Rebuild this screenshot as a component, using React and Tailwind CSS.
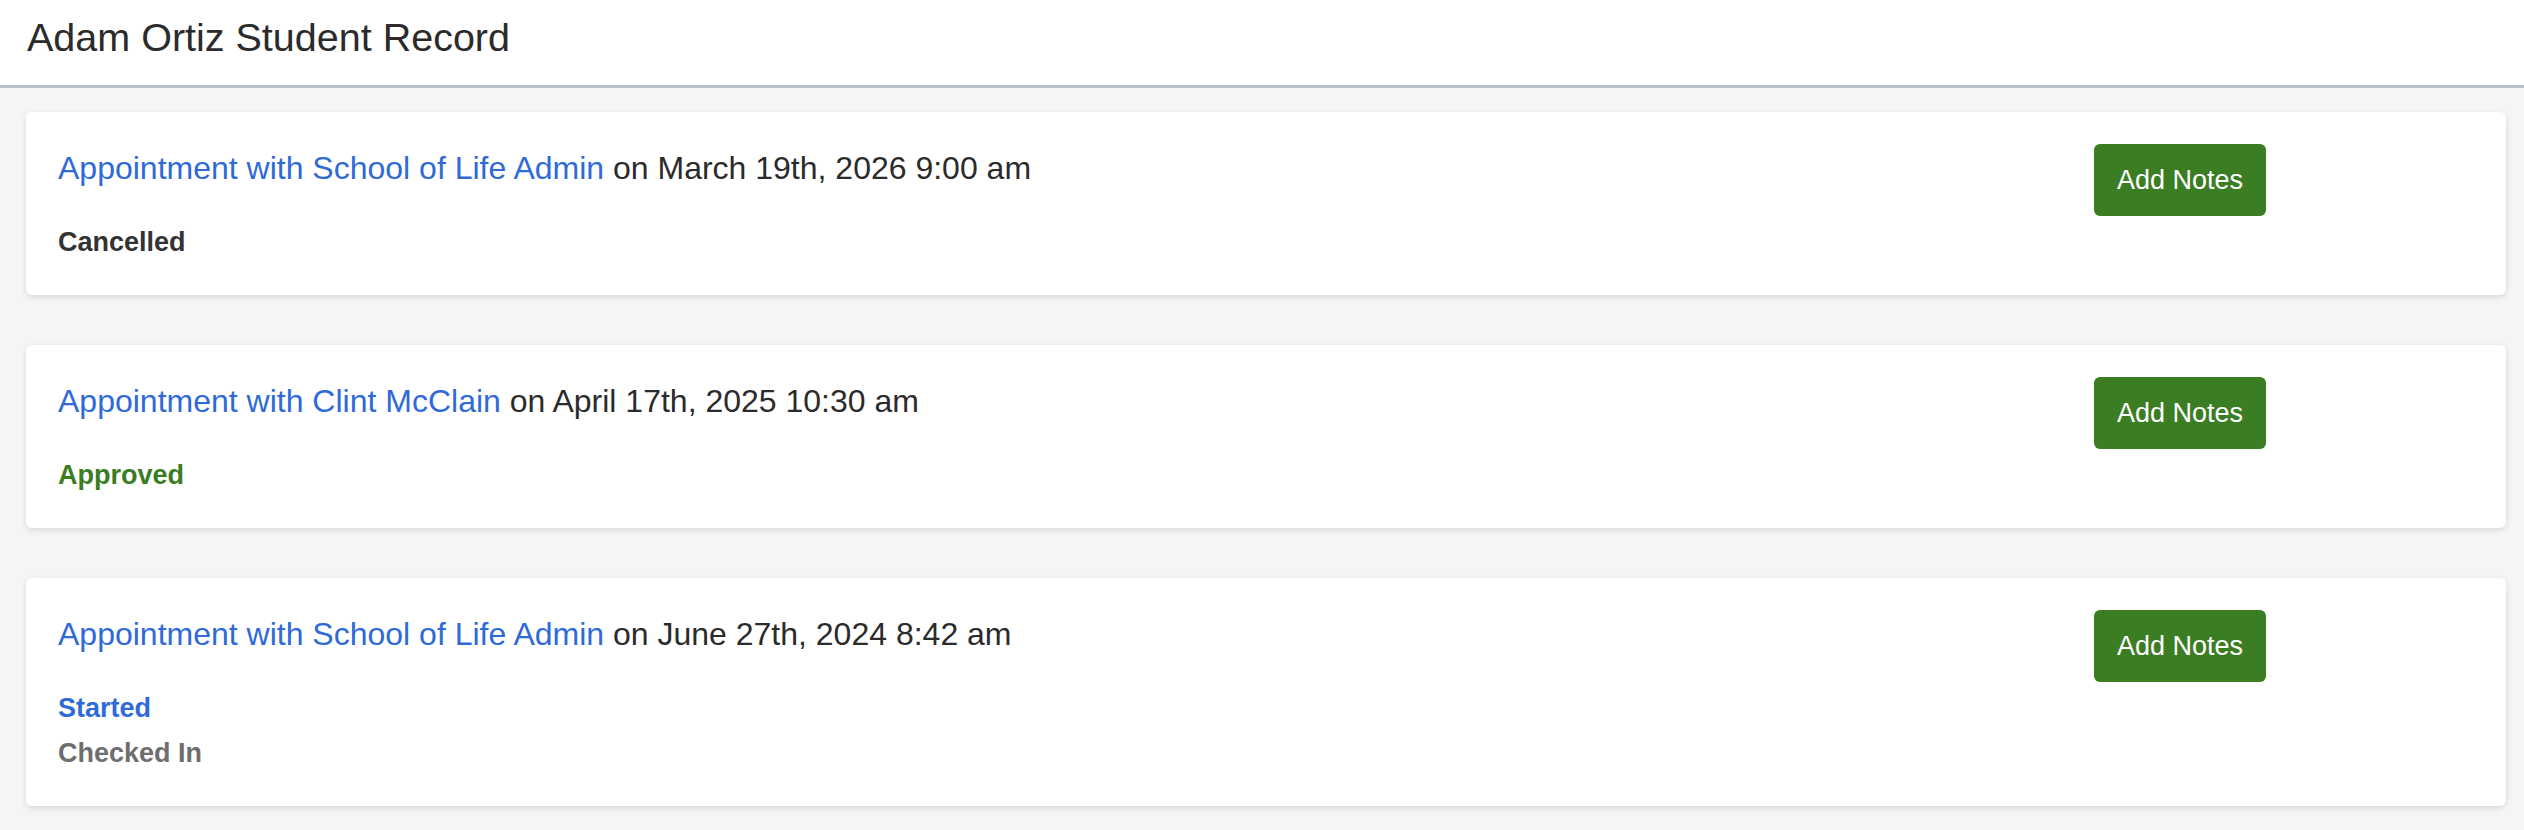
const appointments = [
  {
    who: "School of Life Admin",
    when: "March 19th, 2026 9:00 am",
    statuses: [{ label: "Cancelled", className: "text-[#333333]" }],
  },
  {
    who: "Clint McClain",
    when: "April 17th, 2025 10:30 am",
    statuses: [{ label: "Approved", className: "text-[#3a7d23]" }],
  },
  {
    who: "School of Life Admin",
    when: "June 27th, 2024 8:42 am",
    statuses: [
      { label: "Started", className: "text-[#2f6ad9]" },
      { label: "Checked In", className: "text-[#6e6e6e]" },
    ],
  },
];

function AppointmentCard({ appt }) {
  return (
    <div className="flex justify-between bg-white rounded-[6px] shadow-[0_2px_6px_rgba(0,0,0,0.12)] pt-[32px] px-[32px] pb-[30px]">
      <div>
        <div className="text-[32px] leading-[48px] text-[#2b2b2b]">
          <a href="#" className="text-[#2f6ad9]">
            Appointment with {appt.who}
          </a>{" "}
          on {appt.when}
        </div>
        <div className="mt-[28px]">
          {appt.statuses.map((s) => (
            <div
              key={s.label}
              className={`text-[27px] leading-[45px] font-semibold ${s.className}`}
            >
              {s.label}
            </div>
          ))}
        </div>
      </div>
      <div className="w-[380px] shrink-0">
        <button className="h-[72px] w-[172px] rounded-[6px] bg-[#3a7d23] text-white text-[27px] font-medium">
          Add Notes
        </button>
      </div>
    </div>
  );
}

export default function App() {
  return (
    <div
      className="min-h-screen bg-[#f5f5f5]"
      style={{ fontFamily: '"Liberation Sans", Arial, sans-serif' }}
    >
      <div className="h-[88px] bg-white border-b-[3px] border-[#b8c2c8] flex items-center pl-[27px]">
        <h1 className="text-[39.5px] text-[#2b2b2b] -mt-[10px]">
          Adam Ortiz Student Record
        </h1>
      </div>
      <div className="pl-[26px] pr-[18px] pt-[24px] pb-[24px] flex flex-col gap-[50px]">
        {appointments.map((a, i) => (
          <AppointmentCard key={i} appt={a} />
        ))}
      </div>
    </div>
  );
}
